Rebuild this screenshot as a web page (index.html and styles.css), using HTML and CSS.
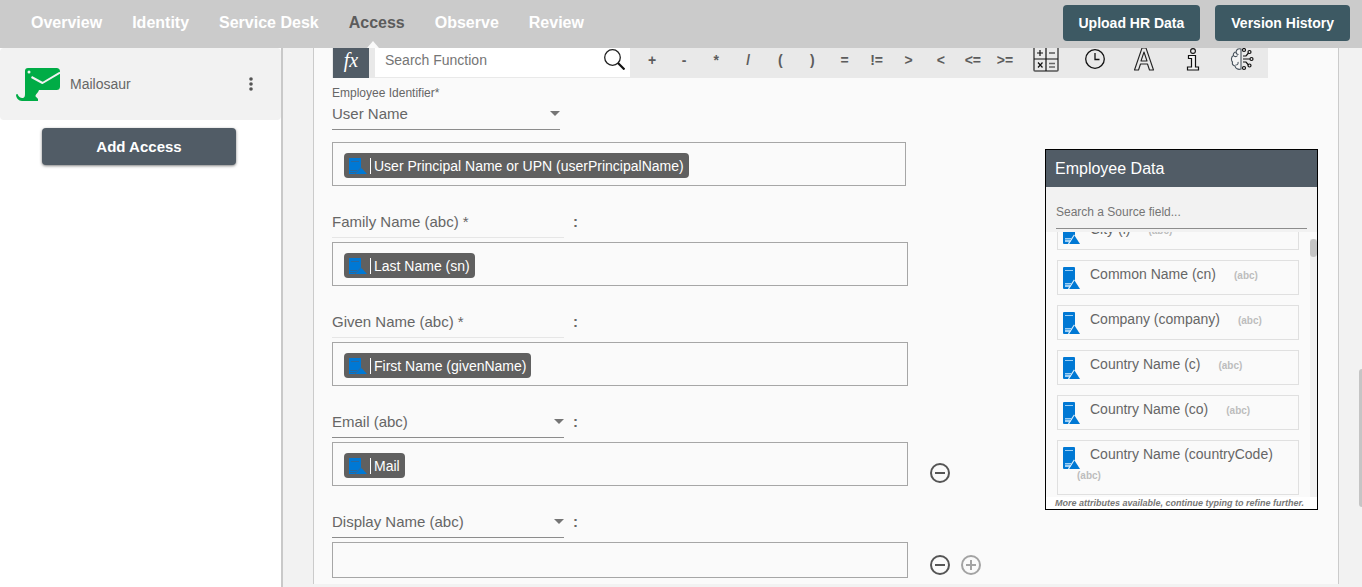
FILE: index.html
```html
<!DOCTYPE html>
<html lang="en">
<head>
<meta charset="utf-8">
<meta name="viewport" content="width=device-width, initial-scale=1">
<title>Access</title>
<link rel="stylesheet" href="styles.css">
</head>
<body>
<svg class="defs" aria-hidden="true">
  <symbol id="source" viewBox="0 0 17 22">
    <path fill="#0078d4" d="M1 0h10a1 1 0 0 1 1 1v20a1 1 0 0 1-1 1H1a1 1 0 0 1-1-1V1a1 1 0 0 1 1-1z"/>
    <path fill="#9fd0f5" d="M2 3h8v1H2zM2 16h6v1H2zM2 17.500h5v2.500H2z"/>
    <path fill="none" stroke="#d5ebfb" stroke-width="1.400" d="M11.500 13L5.500 22"/>
    <path fill="#0078d4" d="M11.500 13.500L17 22H6.500z"/>
  </symbol>
  <symbol id="source-tag" viewBox="0 0 18 16">
    <path fill="#0078d4" d="M0 0h12v16H0z"/>
    <path fill="#2c689b" d="M2 3h8v1H2zM1 12h7v1H1zM1 14h6v1H1z"/>
    <path fill="none" stroke="#356a97" stroke-width="1" d="M12 9.500l-6 6.500"/>
    <path fill="#0078d4" d="M12.500 10L7.500 16H18z"/>
  </symbol>
  <symbol id="minus" viewBox="0 0 20 20">
    <circle cx="10" cy="10" r="9" fill="none" stroke="currentColor" stroke-width="2"/>
    <path stroke="currentColor" stroke-width="2" d="M5 10h10"/>
  </symbol>
  <symbol id="plus" viewBox="0 0 20 20">
    <circle cx="10" cy="10" r="9" fill="none" stroke="currentColor" stroke-width="2"/>
    <path stroke="currentColor" stroke-width="2" d="M5 10h10M10 5v10"/>
  </symbol>
</svg>

<header class="topbar">
  <nav class="tabs" aria-label="Main">
    <a href="#overview">Overview</a>
    <a href="#identity">Identity</a>
    <a href="#desk">Service Desk</a>
    <a href="#access" class="active" aria-current="page">Access</a>
    <a href="#observe">Observe</a>
    <a href="#review">Review</a>
  </nav>
  <div class="actions">
    <button type="button">Upload HR Data</button>
    <button type="button">Version History</button>
  </div>
</header>

<div class="layout">
  <aside class="sidebar">
    <div class="app">
      <svg class="app-logo" viewBox="0 0 44 34" aria-hidden="true">
        <path fill="#00ac46" d="M12 0h28.500a3.500 3.500 0 0 1 3.500 3.500v15a3.500 3.500 0 0 1-3.500 3.500H23c-1 3-3.500 4-3.500 6 0 1 1.500 1.200 2.500 3v2H6C2.500 33 0 30 0 26.500L1.500 26c1 3 3.500 4.500 5.500 4 1.500-.500 2-1.500 2-4V3a3 3 0 0 1 3-3z"/>
        <circle cx="13" cy="4" r="1.500" fill="#f2f2f2"/>
        <path fill="none" stroke="#f2f2f2" stroke-width="2" stroke-linejoin="round" d="M15.500 9L26.500 15 44 4.500"/>
      </svg>
      <span class="app-name">Mailosaur</span>
      <button type="button" class="more" aria-label="More options">
        <svg viewBox="0 0 4 14" aria-hidden="true"><g fill="#555"><circle cx="2" cy="2" r="1.800"/><circle cx="2" cy="7" r="1.800"/><circle cx="2" cy="12" r="1.800"/></g></svg>
      </button>
    </div>
    <button type="button" class="add">Add Access</button>
  </aside>

  <main class="main">
    <section class="card">
      <div class="toolbar">
        <span class="fx">fx</span>
        <label class="search">
          <input type="search" placeholder="Search Function" aria-label="Search Function">
          <svg viewBox="0 0 21 22" aria-hidden="true">
            <circle cx="8.500" cy="9.500" r="7.800" fill="none" stroke="#222" stroke-width="1.300"/>
            <path stroke="#111" stroke-width="2.200" d="M14 15l6.500 6.500"/>
          </svg>
        </label>
        <div class="operators">
          <button type="button">+</button><button type="button">-</button><button type="button">*</button><button type="button">/</button><button type="button">(</button><button type="button">)</button><button type="button">=</button><button type="button">!=</button><button type="button">&gt;</button><button type="button">&lt;</button><button type="button">&lt;=</button><button type="button">&gt;=</button>
        </div>
        <div class="functions">
          <button type="button" aria-label="Math">
            <svg viewBox="0 0 26 30" aria-hidden="true">
              <rect x="1" y="1" width="24" height="25" rx="1" fill="none" stroke="#555" stroke-width="1.600"/>
              <path stroke="#111" stroke-width="1.200" fill="none" d="M13 1v25M1 14h24M4 8h6M7 5v6M16 8h6M5 17.500l4.500 5M9.500 17.500l-4.500 5"/>
              <path stroke="#666" stroke-width="1.300" d="M16 18.500h6M16 22h6"/>
            </svg>
          </button>
          <button type="button" aria-label="Date and time">
            <svg viewBox="0 0 26 30" aria-hidden="true"><circle cx="13" cy="14" r="9.300" fill="none" stroke="#111" stroke-width="1.300"/><path fill="none" stroke="#111" stroke-width="1.300" d="M13 8v6.500h4.500"/></svg>
          </button>
          <button type="button" aria-label="Text">
            <svg viewBox="0 0 26 30" aria-hidden="true"><path fill="none" stroke="#222" stroke-width="1.100" stroke-linejoin="round" d="M11 3h4l7.500 22h-4l-2-6h-7l-2 6h-4zM13 7l-3 9h6z"/></svg>
          </button>
          <button type="button" aria-label="Information">
            <svg viewBox="0 0 26 30" aria-hidden="true"><circle cx="13" cy="6" r="2.400" fill="none" stroke="#111" stroke-width="1.100"/><path fill="#f4f4f4" stroke="#111" stroke-width="1.200" d="M8.500 10.500h7v11.500h3v3h-11v-3h4v-8.500h-3z"/></svg>
          </button>
          <button type="button" aria-label="Intelligence">
            <svg viewBox="0 0 26 30" aria-hidden="true">
              <g fill="none" stroke="#47525c" stroke-width="1.100"><path fill="#f4f4f4" d="M12 4v20c-3 1-5.500-.500-6-3-2-.500-3-2-2.500-4-1.500-1.500-1.500-5.500 1-6.500-.500-1.500.500-3.500 2.500-3.500.500-2.500 2-4 5-3z"/><path d="M7 7c0 2 1 2.500 2.500 2.500M4.500 10.500c1 1.500 3 1.500 4 0M6.500 20c2 0 3-1 2.500-3"/></g>
              <g fill="none" stroke="#111" stroke-width="1.200"><path d="M14 14h7M14 11h3l2.500-3M14 17h3l2.500 3"/><circle cx="22.500" cy="14" r="1.500"/><circle cx="20.500" cy="7" r="1.500"/><circle cx="20.500" cy="20.500" r="1.500"/><circle cx="15" cy="5" r="1.500"/><circle cx="15" cy="23" r="1.500"/></g>
            </svg>
          </button>
        </div>
      </div>

      <div class="content">
        <form class="form">
          <div class="field">
            <label class="caption" for="identifier">Employee Identifier*</label>
            <div class="name narrow"><select id="identifier"><option>User Name</option></select></div>
            <div class="row first"><div class="box slim"><span class="tag"><svg><use href="#source-tag"/></svg><span>User Principal Name or UPN (userPrincipalName)</span></span></div></div>
          </div>
          <div class="field">
            <div class="name locked"><input value="Family Name (abc) *" aria-label="Target field 1" disabled><b>:</b></div>
            <div class="row"><div class="box"><span class="tag"><svg><use href="#source-tag"/></svg><span>Last Name (sn)</span></span></div></div>
          </div>
          <div class="field">
            <div class="name locked"><input value="Given Name (abc) *" aria-label="Target field 2" disabled><b>:</b></div>
            <div class="row"><div class="box"><span class="tag"><svg><use href="#source-tag"/></svg><span>First Name (givenName)</span></span></div></div>
          </div>
          <div class="field">
            <div class="name"><select aria-label="Target field 3"><option>Email (abc)</option></select><b>:</b></div>
            <div class="row"><div class="box"><span class="tag"><svg><use href="#source-tag"/></svg><span>Mail</span></span></div>
              <button type="button" class="round" aria-label="Remove"><svg><use href="#minus"/></svg></button></div>
          </div>
          <div class="field">
            <div class="name"><select aria-label="Target field 4"><option>Display Name (abc)</option></select><b>:</b></div>
            <div class="row"><div class="box"></div>
              <button type="button" class="round" aria-label="Remove"><svg><use href="#minus"/></svg></button>
              <button type="button" class="round faint" aria-label="Add"><svg><use href="#plus"/></svg></button></div>
          </div>
        </form>

        <section class="panel">
          <h2>Employee Data</h2>
          <div class="panel-search"><input type="text" placeholder="Search a Source field..." aria-label="Search a Source field"></div>
          <div class="list">
            <ul>
              <li><svg><use href="#source"/></svg>City (l)<small>(abc)</small></li>
              <li><svg><use href="#source"/></svg>Common Name (cn)<small>(abc)</small></li>
              <li><svg><use href="#source"/></svg>Company (company)<small>(abc)</small></li>
              <li><svg><use href="#source"/></svg>Country Name (c)<small>(abc)</small></li>
              <li><svg><use href="#source"/></svg>Country Name (co)<small>(abc)</small></li>
              <li><svg><use href="#source"/></svg>Country Name (countryCode) <small>(abc)</small></li>
            </ul>
            <div class="track"><div class="thumb"></div></div>
          </div>
          <p class="hint">More attributes available, continue typing to refine further.</p>
        </section>
      </div>
    </section>
    <div class="page-thumb"></div>
  </main>
</div>
</body>
</html>
```
FILE: styles.css
```css
* { box-sizing: border-box; }

body {
  margin: 0;
  height: 100vh;
  display: flex;
  flex-direction: column;
  overflow: hidden;
  background: #fff;
  color: #666;
  font-family: "Liberation Sans", Arial, sans-serif;
  font-size: 15px;
}

button, input, select { font: inherit; color: inherit; }
button { border: 0; padding: 0; background: none; }
.defs { position: absolute; width: 0; height: 0; }

/* Top bar */
.topbar {
  flex: none;
  height: 48px;
  padding: 0 12px 0 31px;
  display: flex;
  align-items: center;
  justify-content: space-between;
  background: #cbcbcb;
}
.tabs { display: flex; gap: 30px; height: 48px; }
.tabs a {
  position: relative;
  line-height: 46px;
  font-size: 16px;
  font-weight: bold;
  color: #fff;
  text-decoration: none;
}
.tabs .active { color: #5c5c5c; }
.tabs .active::after {
  content: "";
  position: absolute;
  left: 18px;
  bottom: 0;
  border: 6px solid transparent;
  border-top: 0;
  border-bottom: 7px solid #fafafa;
}
.actions { display: flex; gap: 15px; height: 48px; padding-top: 5px; }
.actions button {
  height: 36px;
  padding: 0 16px;
  border-radius: 4px;
  background: #3d5963;
  color: #fff;
  font-size: 14px;
  font-weight: bold;
}

.layout { flex: 1; display: flex; min-height: 0; }

/* Sidebar */
.sidebar {
  flex: none;
  width: 283px;
  border-right: 2px solid #c9c9c9;
  background: #fff;
  display: flex;
  flex-direction: column;
}
.app {
  height: 72px;
  padding: 0 23px 0 16px;
  display: flex;
  align-items: center;
  background: #f2f2f2;
  border-radius: 4px;
}
.app-logo { width: 44px; height: 34px; margin: 2px 10px 0 0; }
.app-name { flex: 1; font-size: 14px; }
.more { width: 14px; height: 24px; display: grid; place-items: center; }
.more svg { width: 4px; height: 14px; }
.add {
  margin: 8px 45px 0 42px;
  height: 37px;
  border-radius: 4px;
  background: #515c66;
  color: #fff;
  font-weight: bold;
  box-shadow: 0 1px 3px rgba(0, 0, 0, .5);
}

/* Main */
.main {
  position: relative;
  flex: 1;
  min-width: 0;
  padding: 0 23px 0 30px;
  background: #f2f2f2;
  overflow: hidden;
}
.page-thumb {
  position: absolute;
  right: 0;
  top: 321px;
  width: 3px;
  height: 138px;
  border-radius: 3px 0 0 3px;
  background: #c5c5c5;
}
.card {
  padding: 0 20px 6px 18px;
  border: 1px solid #cbcbcb;
  border-width: 0 1px;
  background: #fafafa;
}

/* Function toolbar */
.toolbar {
  display: flex;
  height: 30px;
  margin-right: 50px;
  background: #e9e9e9;
  overflow: hidden;
}
.fx {
  flex: none;
  width: 36px;
  margin: 0 6px 0 1px;
  background: #515c66;
  color: #fff;
  text-align: center;
  font: italic 20px/24px "Liberation Serif", serif;
}
.search {
  flex: none;
  width: 255px;
  height: 29px;
  padding: 0 5px 0 10px;
  display: flex;
  background: #fff;
}
.search input {
  flex: 1;
  min-width: 0;
  height: 24px;
  border: 0;
  padding: 0;
  background: none;
  font-size: 14px;
}
.search svg { width: 21px; height: 22px; }
.operators {
  flex: 1;
  margin-left: 6px;
  height: 24px;
  display: grid;
  grid-template-columns: repeat(12, 1fr);
}
.operators button { font-size: 14px; font-weight: bold; color: #5c5c5c; }
.functions { display: flex; padding-right: 2px; }
.functions button { width: 49px; height: 30px; }
.functions svg { width: 26px; height: 30px; display: block; margin: -6px auto 0; }

input::placeholder { color: #757575; opacity: 1; }

/* Mapping form */
.content { display: flex; justify-content: space-between; align-items: flex-start; }
.form { padding-top: 6px; }
.field { margin-bottom: 24px; }
.field:last-child { margin-bottom: 0; }
.caption { display: block; height: 18px; font-size: 12px; line-height: 18px; }
.name { display: flex; align-items: center; height: 28px; }
.name select, .name input {
  width: 232px;
  height: 28px;
  padding: 0 0 4px;
  border: 0;
  border-bottom: 1px solid #8c8c8c;
  border-radius: 0;
  appearance: none;
  background: none;
}
.name select {
  background: url("data:image/svg+xml,%3Csvg xmlns='http://www.w3.org/2000/svg' width='10' height='5'%3E%3Cpath fill='%23757575' d='M0 0h10L5 5z'/%3E%3C/svg%3E") no-repeat right 9px;
}
.narrow select { width: 228px; }
.locked input { border-bottom-color: #e6e6e6; color: #666; }
.name b { margin: 0 0 6px 9px; }
.row { display: flex; align-items: flex-end; margin-top: 4px; }
.row.first { margin-top: 12px; }
.box {
  width: 576px;
  min-height: 36px;
  padding: 10px 11px 7px;
  border: 1px solid #a6a6a6;
}
.slim { width: 574px; }
.tag {
  display: inline-flex;
  align-items: center;
  height: 25px;
  padding: 0 5px;
  border-radius: 4px;
  background: #606060;
  color: #fff;
  font-size: 14px;
  vertical-align: top;
}
.tag svg { width: 18px; height: 16px; margin-right: 3px; }
.tag span { padding-left: 3px; border-left: 1px solid #fff; line-height: 16px; }
.round { width: 20px; height: 20px; margin: 0 0 3px 11px; color: #555; }
.box + .round { margin-left: 22px; }
.round svg { display: block; width: 20px; height: 20px; }
.faint { color: #a3a3a3; }

/* Source attribute panel */
.panel {
  width: 273px;
  margin-top: 71px;
  border: 1px solid #000;
  background: #fafafa;
}
.panel h2 {
  margin: 0;
  padding-left: 9px;
  background: #515c66;
  color: #fff;
  font-size: 16px;
  font-weight: normal;
  line-height: 37px;
}
.panel-search { height: 45px; padding: 8px 10px 0; background: #f2f2f2; }
.panel-search input {
  width: 100%;
  height: 34px;
  padding: 0;
  border: 0;
  border-bottom: 1px solid #8c8c8c;
  background: none;
  font-size: 12px;
}
.list { display: flex; height: 265px; overflow: hidden; }
.list ul { flex: 1; margin: -17px 11px 0; padding: 0; list-style: none; }
.list li {
  margin-bottom: 10px;
  padding: 3px 0 8px 1px;
  border: 1px solid #e0e0e0;
  font-size: 14px;
  line-height: 20px;
}
.list li svg {
  width: 17px;
  height: 22px;
  margin: 3px 10px -8px 4px;
  vertical-align: top;
}
.list small {
  display: inline-block;
  margin-left: 18px;
  color: #bdbdbd;
  font-size: 10px;
  font-weight: bold;
}
.track { width: 7px; margin-top: 7px; background: #f0f0f0; }
.thumb { height: 18px; border-radius: 4px; background: #c5c5c5; }
.hint {
  margin: 0;
  padding-left: 9px;
  background: #fff;
  color: #777;
  font-size: 9px;
  font-style: italic;
  font-weight: bold;
  line-height: 12px;
  white-space: nowrap;
}
```
